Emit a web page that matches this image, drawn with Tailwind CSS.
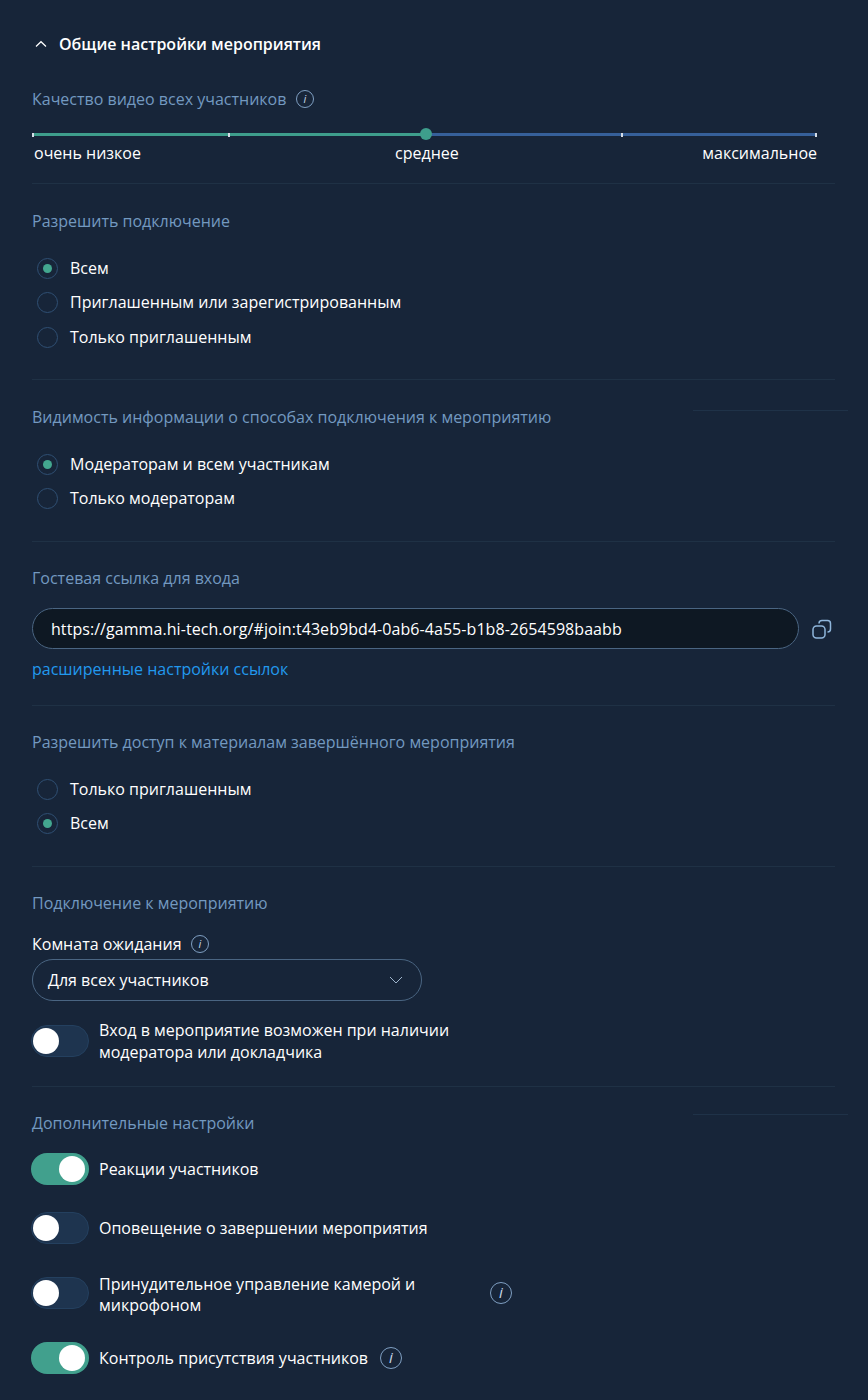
<!DOCTYPE html>
<html lang="ru">
<head>
<meta charset="UTF-8">
<title>Общие настройки мероприятия</title>
<script src="https://cdn.jsdelivr.net/npm/@tailwindcss/browser@4"></script>
</head>
<body class="bg-[#172539] text-white font-['Open_Sans',sans-serif] text-base">
<div class="relative w-[868px] h-[1400px] overflow-hidden pl-8 pr-[33px]">
  <!-- faint leftovers -->
  <div class="absolute left-[693px] top-[410px] w-[155px] h-px bg-[#1f3248]"></div>
  <div class="absolute left-[693px] top-[1114px] w-[155px] h-px bg-[#1f3248]"></div>

  <!-- Header -->
  <div class="flex items-center h-6 mt-8 font-semibold">
    <svg class="w-3 h-3 ml-[3px] mr-3" viewBox="0 0 12 12" fill="none" stroke="#fff" stroke-width="1.2"><path d="M1 8.5 6 3.7l5 4.8"/></svg>
    <span>Общие настройки мероприятия</span>
  </div>

  <!-- Video quality -->
  <section class="h-[128px] pt-[31px] border-b border-[#1f3145]">
    <div class="flex items-center h-6 text-[#7399c0]">
      <span>Качество видео всех участников</span>
      <svg class="w-5 h-5 ml-[9px]" viewBox="0 0 20 20" fill="none"><circle cx="10" cy="10" r="8.5" stroke="#7f9fc2" stroke-width="1"/><text x="10" y="14" text-anchor="middle" font-size="11" font-style="italic" font-family="Open Sans, sans-serif" fill="#c9d8e8">i</text></svg>
    </div>
    <div class="relative h-[3px] w-[784px] mt-[22px] bg-[#36609a]">
      <div class="absolute left-0 top-0 h-[3px] w-[393px] bg-[#3e9e8c]"></div>
      <div class="absolute left-0 top-0 w-[2px] h-[4px] bg-[#d5dde6]"></div>
      <div class="absolute left-[196px] top-0 w-[2px] h-[4px] bg-[#d5dde6]"></div>
      <div class="absolute left-[589px] top-0 w-[2px] h-[4px] bg-[#d5dde6]"></div>
      <div class="absolute left-[783px] top-0 w-[2px] h-[4px] bg-[#d5dde6]"></div>
      <div class="absolute left-[388px] top-[-5px] w-3 h-3 rounded-full bg-[#3e9e8c]"></div>
    </div>
    <div class="relative flex justify-between w-[785px] mt-[5px] leading-6">
      <span class="ml-[2px]">очень низкое</span>
      <span class="absolute left-[363px]">среднее</span>
      <span>максимальное</span>
    </div>
  </section>

  <!-- Allow connection -->
  <section class="h-[196px] pt-[25px] border-b border-[#1f3145]">
    <div class="h-6 leading-6 text-[#7399c0]">Разрешить подключение</div>
    <div class="flex flex-col mt-[18px]">
      <label class="flex items-center h-[34px]"><span class="flex items-center justify-center w-[21px] h-[21px] ml-[5px] mr-[12px] rounded-full border border-[#2f4f73]"><span class="w-[9px] h-[9px] rounded-full bg-[#43a78f]"></span></span>Всем</label>
      <label class="flex items-center h-[34px]"><span class="w-[21px] h-[21px] ml-[5px] mr-[12px] rounded-full border border-[#2f4f73]"></span>Приглашенным или зарегистрированным</label>
      <label class="flex items-center h-[36px]"><span class="w-[21px] h-[21px] ml-[5px] mr-[12px] rounded-full border border-[#2f4f73]"></span>Только приглашенным</label>
    </div>
  </section>

  <!-- Visibility -->
  <section class="h-[162px] pt-[25px] border-b border-[#1f3145]">
    <div class="h-6 leading-6 text-[#7399c0]">Видимость информации о способах подключения к мероприятию</div>
    <div class="flex flex-col mt-[18px]">
      <label class="flex items-center h-[34px]"><span class="flex items-center justify-center w-[21px] h-[21px] ml-[5px] mr-[12px] rounded-full border border-[#2f4f73]"><span class="w-[9px] h-[9px] rounded-full bg-[#43a78f]"></span></span>Модераторам и всем участникам</label>
      <label class="flex items-center h-[34px]"><span class="w-[21px] h-[21px] ml-[5px] mr-[12px] rounded-full border border-[#2f4f73]"></span>Только модераторам</label>
    </div>
  </section>

  <!-- Guest link -->
  <section class="h-[164px] pt-[24px] border-b border-[#1f3145]">
    <div class="h-6 leading-6 text-[#7399c0]">Гостевая ссылка для входа</div>
    <div class="flex items-center mt-[18px]">
      <div class="flex items-center w-[767px] h-[41px] pl-[18px] rounded-full bg-[#0e1823] border border-[#4a6582] tracking-[0.06px]">https://gamma.hi-tech.org/#join:t43eb9bd4-0ab6-4a55-b1b8-2654598baabb</div>
      <svg class="w-5 h-5 ml-[13px]" viewBox="0 0 20 20" fill="none" stroke="#8fb6dc" stroke-width="1.5"><rect x="1" y="7" width="12" height="12" rx="3.5"/><path d="M7 4.5C7 2.5 8 1.5 10 1.5h5.5c2 0 3 1 3 3V10c0 2-1 3-3 3"/></svg>
    </div>
    <div class="h-6 leading-6 mt-2 text-[#2299ee]">расширенные настройки ссылок</div>
  </section>

  <!-- Materials access -->
  <section class="h-[161px] pt-[24px] border-b border-[#1f3145]">
    <div class="h-6 leading-6 text-[#7399c0]">Разрешить доступ к материалам завершённого мероприятия</div>
    <div class="flex flex-col mt-[18px]">
      <label class="flex items-center h-[34px]"><span class="w-[21px] h-[21px] ml-[5px] mr-[12px] rounded-full border border-[#2f4f73]"></span>Только приглашенным</label>
      <label class="flex items-center h-[34px]"><span class="flex items-center justify-center w-[21px] h-[21px] ml-[5px] mr-[12px] rounded-full border border-[#2f4f73]"><span class="w-[9px] h-[9px] rounded-full bg-[#43a78f]"></span></span>Всем</label>
    </div>
  </section>

  <!-- Connection -->
  <section class="h-[220px] pt-[24px] border-b border-[#1f3145]">
    <div class="h-6 leading-6 text-[#7399c0]">Подключение к мероприятию</div>
    <div class="flex items-center h-6 mt-[17px]">
      <span>Комната ожидания</span>
      <svg class="w-5 h-5 ml-[8px]" viewBox="0 0 20 20" fill="none"><circle cx="10" cy="10" r="8.5" stroke="#7f9fc2" stroke-width="1"/><text x="10" y="14" text-anchor="middle" font-size="11" font-style="italic" font-family="Open Sans, sans-serif" fill="#c9d8e8">i</text></svg>
    </div>
    <div class="flex items-center justify-between w-[390px] h-[42px] mt-[3px] pl-[15px] pr-[18px] rounded-full border border-[#4a6582]">
      <span>Для всех участников</span>
      <svg class="w-[14px] h-2" viewBox="0 0 14 8" fill="none" stroke="#9db4cc" stroke-width="1"><path d="M1 1l6 6 6-6"/></svg>
    </div>
    <div class="flex items-center mt-[17px] w-[440px] -ml-px">
      <span class="flex items-center shrink-0 w-[58px] h-8 mr-[10px] pl-px rounded-full bg-[#1e344f] border border-[#24405f]"><span class="w-[26px] h-[26px] rounded-full bg-white"></span></span>
      <span class="leading-[22px] pt-px">Вход в мероприятие возможен при наличии модератора или докладчика</span>
    </div>
  </section>

  <!-- Extra settings -->
  <section class="pt-[24px]">
    <div class="h-6 leading-6 text-[#7399c0]">Дополнительные настройки</div>
    <div class="flex items-center h-8 mt-[18px] -ml-px">
      <span class="flex items-center justify-end shrink-0 w-[58px] h-8 mr-[10px] pr-[4px] rounded-full bg-[#41a08d]"><span class="w-[26px] h-[26px] rounded-full bg-white"></span></span>
      <span>Реакции участников</span>
    </div>
    <div class="flex items-center h-8 mt-[27px] -ml-px">
      <span class="flex items-center shrink-0 w-[58px] h-8 mr-[10px] pl-px rounded-full bg-[#1e344f] border border-[#24405f]"><span class="w-[26px] h-[26px] rounded-full bg-white"></span></span>
      <span>Оповещение о завершении мероприятия</span>
    </div>
    <div class="flex items-center h-[50px] mt-[24px] -ml-px">
      <span class="flex items-center shrink-0 w-[58px] h-8 mr-[10px] pl-px rounded-full bg-[#1e344f] border border-[#24405f]"><span class="w-[26px] h-[26px] rounded-full bg-white"></span></span>
      <span class="w-[380px] leading-[21px] pt-[3px]">Принудительное управление камерой и микрофоном</span>
      <svg class="w-6 h-6 ml-[10px]" viewBox="0 0 24 24" fill="none"><circle cx="12" cy="12" r="10.5" stroke="#7f9fc2" stroke-width="1"/><text x="12" y="17" text-anchor="middle" font-size="15" font-style="italic" font-family="Open Sans, sans-serif" fill="#c9d8e8">i</text></svg>
    </div>
    <div class="flex items-center h-8 mt-[24px] -ml-px">
      <span class="flex items-center justify-end shrink-0 w-[58px] h-8 mr-[10px] pr-[4px] rounded-full bg-[#41a08d]"><span class="w-[26px] h-[26px] rounded-full bg-white"></span></span>
      <span>Контроль присутствия участников</span>
      <svg class="w-6 h-6 ml-[11px]" viewBox="0 0 24 24" fill="none"><circle cx="12" cy="12" r="10.5" stroke="#7f9fc2" stroke-width="1"/><text x="12" y="17" text-anchor="middle" font-size="15" font-style="italic" font-family="Open Sans, sans-serif" fill="#c9d8e8">i</text></svg>
    </div>
  </section>
</div>
</body>
</html>
